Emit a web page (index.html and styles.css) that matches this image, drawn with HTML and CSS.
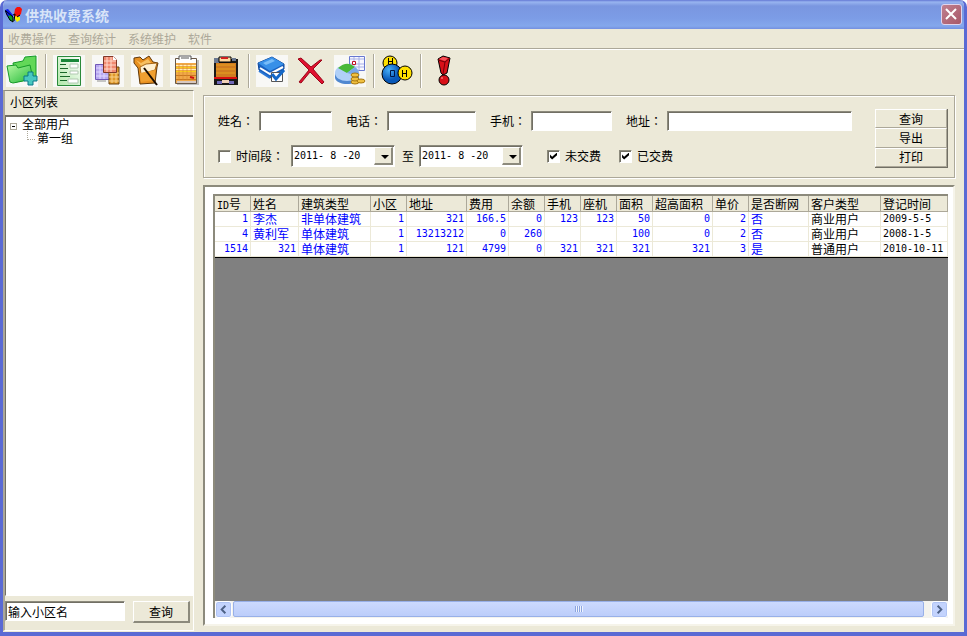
FILE: index.html
```html
<!DOCTYPE html>
<html lang="zh-CN">
<head>
<meta charset="utf-8">
<title>供热收费系统</title>
<link rel="stylesheet" href="styles.css">
</head>
<body>
<div class="window">
  <header class="titlebar">
    <svg class="logo" viewBox="0 0 17 16" aria-hidden="true">
      <path d="M0 3l3-1 5 6v5l-3-2-3-3z" fill="#0a18f0"/>
      <path d="M3 9l3-1 2 3v3H5z" fill="#0aa028"/>
      <path d="M9 8l1-6 2-2h3l2 2-1 5-4 4H9z" fill="#f81008"/>
      <path d="M10 9l5 1v3l-3 2-2-3z" fill="#f8f000"/>
      <path d="M0 3l2 5 3 5 3 2M1 4l7 6v5M9 14l1-7-2 1" fill="none" stroke="#000"/>
      <path d="M12 10l3-2" stroke="#000"/>
    </svg>
    <h1>供热收费系统</h1>
    <button class="close" aria-label="关闭"><svg viewBox="0 0 19 19"><path d="M4 4l10 10M14 4l-10 10" stroke="#fff" stroke-width="2"/></svg></button>
  </header>

  <nav class="menu">
    <a href="#">收费操作</a><a href="#">查询统计</a><a href="#">系统维护</a><a href="#">软件</a>
  </nav>

  <div class="toolbar">
    <button class="tool tile" aria-label="新建">
      <svg viewBox="0 0 32 32">
        <defs>
          <linearGradient id="green" x1="0" y1="0" x2="1" y2="1"><stop offset="0" stop-color="#b4f8a0"/><stop offset="1" stop-color="#20b838"/></linearGradient>
        </defs>
        <path d="M7 8l10-2 2-4 11-1v22l-20 4z" fill="#62d858" stroke="#169a28"/>
        <path d="M1 11l9-1 2 3 12-3 3 14-20 4-3-1z" fill="url(#green)" stroke="#169a28"/>
        <path d="M22 17h5v4h4v5h-4v4h-5v-4h-4v-5h4z" fill="#48c8c0" stroke="#087888"/>
      </svg>
    </button>
    <span class="sep"></span>
    <button class="tool tile" aria-label="列表">
      <svg viewBox="0 0 32 32">
        <defs><linearGradient id="sheet" x1="1" x2="0" y2="1"><stop offset="0" stop-color="#fff"/><stop offset="1" stop-color="#b0e8a8"/></linearGradient></defs>
        <path d="M4.500 1.500h23v29h-23z" fill="url(#sheet)" stroke="#2a8a3a"/>
        <path d="M8 4h18v3H8z" fill="#188838"/>
        <path d="M17 9h8v4h-8zM17 16h8v3h-8zM15 24h10v4H15z" fill="#fff" stroke="#b0c8b0"/>
        <path d="M7 9.500h6M7 13.500h8M7 17.500h7M7 21.500h10M7 25.500h7" stroke="#186828" stroke-width="1"/>
      </svg>
    </button>
    <button class="tool tile" aria-label="分组">
      <svg viewBox="0 0 32 32">
        <path d="M5 11h9v16H5z" fill="#777" opacity=".4"/>
        <path d="M3.500 9.500h14v15h-14z" fill="#b8a8f0" stroke="#7058b8"/>
        <path d="M4 13h13M4 17h13M4 21h13M8 10v14M12 10v14" stroke="#e0d8ff"/>
        <path d="M17 14l3-2h7v17H17z" fill="#e09828" stroke="#684010"/>
        <path d="M17 18h10M17 22h10M17 26h10M20 14v14M24 14v14" stroke="#f8d088"/>
        <path d="M11.500 1.500h10l3 3v13h-13z" fill="#f08870" stroke="#803828"/>
        <path d="M12 6h12M12 10h12M12 14h12M15 2v15M19 2v15" stroke="#ffd8c8"/>
        <path d="M21 1v4h4z" fill="#fff"/>
      </svg>
    </button>
    <button class="tool tile" aria-label="编辑">
      <svg viewBox="0 0 32 32">
        <path d="M3 3l6-1 3 3 6-4 4 6 5 1-1 4-2 16-15 1-2-16-4-5z" fill="#e89020" stroke="#603808"/>
        <path d="M5 5l5 3 7-4 3 4-9 4z" fill="#f8c060"/>
        <path d="M9 12l6-3 11-1-2 7-14 4z" fill="#fff0d0" stroke="#a86818"/>
        <path d="M9 18l15-3v10l-14 2z" fill="#f0a030"/>
        <path d="M13 13l13 17" stroke="#180c00" stroke-width="2"/>
      </svg>
    </button>
    <button class="tool tile" aria-label="账单">
      <svg viewBox="0 0 32 32">
        <path d="M7 5h22v25H7z" fill="#888" opacity=".5"/>
        <path d="M5.500 3.500h21v25h-21z" fill="#f0a848" stroke="#685848"/>
        <path d="M6 4h20v4H6z" fill="#fff"/>
        <path d="M9 5V1h12v4M11 3h8" fill="#fff" stroke="#555"/>
        <path d="M6 10.500h20M6 14.500h20" stroke="#fff0b8"/>
        <path d="M6 12.500h20M6 16.500h20" stroke="#f8d018"/>
        <path d="M6 20.500h20M6 24.500h20" stroke="#c87820"/>
        <path d="M9 9v16M13 9v16M17 9v16M21 9v16" stroke="#d88830" opacity=".6"/>
        <path d="M20 22l4 1" stroke="#d01010" stroke-width="2"/>
        <path d="M7 26h19v2H7z" fill="#d8c8c0"/>
      </svg>
    </button>
    <button class="tool" aria-label="报表">
      <svg viewBox="0 0 32 32">
        <path d="M5 4h24v26H5z" fill="#181818"/>
        <path d="M5 3h5v5H5zM23 3h4v3h-4z" fill="#6a7890"/>
        <path d="M10 2h12v5H10z" fill="#ffd8a0" stroke="#000"/>
        <path d="M12 3h7" stroke="#d02020" stroke-width="2"/>
        <path d="M7 8h20v15H7z" fill="#d07c20"/>
        <path d="M7 10h19M7 14h19M7 18h19" stroke="#e8a020"/>
        <path d="M5 22h23v2H5z" fill="#d81010"/>
        <path d="M8 26h5v3H8zM20 26h5v3h-5z" fill="#7068b8"/>
        <path d="M13 25h7v3h-7z" fill="#f0d0b8"/>
      </svg>
    </button>
    <span class="sep"></span>
    <button class="tool tile" aria-label="登记">
      <svg viewBox="0 0 32 32">
        <path d="M2 8l14-6 12 7v5l-14 9L3 15z" fill="#1860c0" stroke="#104898"/>
        <path d="M2 8l14-6 12 7-14 7z" fill="#3890e8"/>
        <path d="M7 8l9-4 3 2-9 4z" fill="#78bcf8"/>
        <path d="M4 13l10 6 13-7" fill="none" stroke="#fff" stroke-width="2"/>
        <path d="M3 16l11 7" stroke="#2878d8" stroke-width="2"/>
        <path d="M15.500 17.500h11v9h-11z" fill="#fff" stroke="#555"/>
        <path d="M16 19l4 5 8-9" fill="none" stroke="#1468c8" stroke-width="3"/>
      </svg>
    </button>
    <button class="tool" aria-label="删除">
      <svg viewBox="0 0 32 32">
        <path d="M3 4l3-1 10 9 9-7h2l-9 9 11 13-2 2-12-12L6 28l-2-1 10-12z" fill="#e01030" stroke="#980818"/>
      </svg>
    </button>
    <button class="tool tile" aria-label="统计">
      <svg viewBox="0 0 32 32">
        <path d="M15.500 1.500h15v14h-15z" fill="#f8f8ff" stroke="#6878d0"/>
        <path d="M16 4h14M16 9h14M16 12h14M20 2v13M25 2v13" stroke="#a8b0e8"/>
        <path d="M18.500 6.500h3v3h-3z" fill="#fff" stroke="#c01020"/>
        <path d="M1 19c2-7 22-8 24 0v4c-2 8-22 8-24 0z" fill="#5088d0"/>
        <ellipse cx="13" cy="18" rx="12" ry="8" fill="#b0d0f8"/>
        <path d="M13 18L4 13q9-8 17-1z" fill="#48b838"/>
        <path d="M13 18l8-6q5 4 4 9z" fill="#78a8e8"/>
        <g fill="#f0c040" stroke="#a87810"><ellipse cx="21" cy="27" rx="4" ry="2"/><ellipse cx="21" cy="24" rx="4" ry="2"/><ellipse cx="21" cy="20" rx="4" ry="2"/><ellipse cx="27" cy="26" rx="4" ry="2"/></g>
      </svg>
    </button>
    <span class="sep"></span>
    <button class="tool" aria-label="水">
      <svg viewBox="0 0 32 32">
        <defs><radialGradient id="ball" cx=".35" cy=".3"><stop offset="0" stop-color="#48b0f8"/><stop offset="1" stop-color="#0858b8"/></radialGradient></defs>
        <circle cx="9" cy="8" r="7" fill="#ffe000" stroke="#000"/>
        <path d="M7.500 3v6M11.500 3v6M8 6.500h4" stroke="#000"/>
        <circle cx="11" cy="19" r="10" fill="url(#ball)" stroke="#000"/>
        <path d="M9.500 15.500h4v6h-4z" fill="none" stroke="#001848"/>
        <circle cx="24" cy="18" r="7" fill="#ffe000" stroke="#000"/>
        <path d="M21.500 15v7M25.500 15v7M22 18.500h4" stroke="#000"/>
      </svg>
    </button>
    <span class="sep"></span>
    <button class="tool" aria-label="提醒">
      <svg viewBox="0 0 32 32">
        <path d="M10 4l5-3 7 2-3 15-4 2-2-2z" fill="#d81018" stroke="#000"/>
        <path d="M10 5l7 2 5-4M17 7l-2 12" fill="none" stroke="#700008"/>
        <path d="M11 4l4-2 5 1-3 3z" fill="#f85058"/>
        <circle cx="16" cy="25" r="5" fill="#d81018" stroke="#000"/>
        <circle cx="14" cy="23" r="1" fill="#f87070"/>
      </svg>
    </button>
  </div>

  <div class="body">
    <aside class="side">
      <h2>小区列表</h2>
      <ul class="tree">
        <li><button class="twist" aria-label="折叠"></button>全部用户
          <ul><li>第一组</li></ul>
        </li>
      </ul>
      <form class="side-search">
        <input class="box" type="text" value="输入小区名" aria-label="小区名">
        <button class="btn" type="button">查询</button>
      </form>
    </aside>

    <main class="main">
      <form class="filter">
        <div class="fields">
          <div class="row">
            <label for="name">姓名：</label><input class="box w-name" id="name" type="text">
            <label for="tel">电话：</label><input class="box w-tel" id="tel" type="text">
            <label for="cell">手机：</label><input class="box w-cell" id="cell" type="text">
            <label for="addr">地址：</label><input class="box w-addr" id="addr" type="text">
          </div>
          <div class="row dates">
            <input class="check" id="range" type="checkbox"><label class="range" for="range">时间段：</label>
            <span class="combo"><select id="from" aria-label="开始日期"><option>2011- 8 -20</option></select></span>
            <label class="to" for="until">至</label>
            <span class="combo"><select id="until"><option>2011- 8 -20</option></select></span>
            <input class="check first" id="unpaid" type="checkbox" checked><label class="state" for="unpaid">未交费</label>
            <input class="check" id="paid" type="checkbox" checked><label class="state" for="paid">已交费</label>
          </div>
        </div>
        <div class="stack">
          <button type="button">查询</button>
          <button type="button">导出</button>
          <button type="button">打印</button>
        </div>
      </form>

      <section class="panel">
        <div class="grid">
          <div class="gridview">
            <table>
              <colgroup><col class="c36"><col class="c48"><col class="c72"><col class="c36"><col class="c60"><col class="c42"><col class="c36"><col class="c36"><col class="c36"><col class="c36"><col class="c60"><col class="c36"><col class="c60"><col class="c72"><col></colgroup>
              <thead><tr><th><span class="n">ID</span>号</th><th>姓名</th><th>建筑类型</th><th>小区</th><th>地址</th><th>费用</th><th>余额</th><th>手机</th><th>座机</th><th>面积</th><th>超高面积</th><th>单价</th><th>是否断网</th><th>客户类型</th><th>登记时间</th></tr></thead>
              <tbody>
                <tr><td class="n">1</td><td>李杰</td><td>非单体建筑</td><td class="n">1</td><td class="n">321</td><td class="n">166.5</td><td class="n">0</td><td class="n">123</td><td class="n">123</td><td class="n">50</td><td class="n">0</td><td class="n">2</td><td>否</td><td class="k">商业用户</td><td class="d">2009-5-5</td></tr>
                <tr><td class="n">4</td><td>黄利军</td><td>单体建筑</td><td class="n">1</td><td class="n">13213212</td><td class="n">0</td><td class="n">260</td><td></td><td></td><td class="n">100</td><td class="n">0</td><td class="n">2</td><td>否</td><td class="k">商业用户</td><td class="d">2008-1-5</td></tr>
                <tr><td class="n">1514</td><td class="n">321</td><td>单体建筑</td><td class="n">1</td><td class="n">121</td><td class="n">4799</td><td class="n">0</td><td class="n">321</td><td class="n">321</td><td class="n">321</td><td class="n">321</td><td class="n">3</td><td>是</td><td class="k">普通用户</td><td class="d">2010-10-11</td></tr>
              </tbody>
            </table>
          </div>
          <div class="scroll">
            <button class="arrow" aria-label="向左"><svg viewBox="0 0 16 16"><path d="M10 4L6 8l4 4" fill="none" stroke="#4d6185" stroke-width="2"/></svg></button>
            <div class="track"><div class="thumb"></div></div>
            <button class="arrow" aria-label="向右"><svg viewBox="0 0 16 16"><path d="M6 4l4 4-4 4" fill="none" stroke="#4d6185" stroke-width="2"/></svg></button>
          </div>
        </div>
      </section>
    </main>
  </div>
</div>
</body>
</html>
```
FILE: styles.css
```css
* { box-sizing: border-box; }

body {
  margin: 0;
  background: #fff;
  color: #000;
  font: 12px/16px "Noto Sans CJK SC", sans-serif;
}

h1, h2, ul { margin: 0; padding: 0; list-style: none; font-size: 12px; font-weight: normal; }
button, input, select { font: inherit; color: inherit; margin: 0; padding: 0; border-radius: 0; }
svg { display: block; width: 100%; height: 100%; }

.window {
  display: flex;
  flex-direction: column;
  height: 100vh;
  overflow: hidden;
  border: solid #5a6ad4;
  border-width: 0 3px 4px;
  border-radius: 7px 7px 0 0;
  background: #ece9d8;
}

.titlebar {
  display: flex;
  align-items: center;
  flex: none;
  height: 29px;
  margin: 0 -3px;
  padding: 0 5px;
  background: linear-gradient(#6478d4 0, #98b4f0 2px, #7a96e0 6px, #7c9ce6 18px, #84a8ec 26px, #7490e0 29px);
}
.titlebar h1 { flex: 1; margin-left: 3px; font-size: 14px; font-weight: bold; color: #d8e4f8; }
.logo { width: 17px; height: 16px; }
.close {
  width: 21px;
  height: 21px;
  border: 1px solid #e0d4ec;
  border-radius: 3px;
  background: linear-gradient(135deg, #c08090, #a85868);
}

.menu {
  display: flex;
  gap: 12px;
  flex: none;
  height: 19px;
  padding: 2px 5px;
}
.menu a { color: #aca899; text-decoration: none; }

.toolbar {
  display: flex;
  align-items: center;
  gap: 7px;
  flex: none;
  height: 42px;
  padding: 2px 3px 0;
  border-top: 1px solid #aca899;
  box-shadow: inset 0 1px #fff;
}
.tool { width: 32px; height: 32px; border: 0; background: none; }
.tile { background: #f8f8f6; }
.sep { width: 2px; height: 34px; margin-right: -1px; border-left: 1px solid #aca899; border-right: 1px solid #fff; }

.body { display: flex; flex: 1; min-height: 0; gap: 9px; }

.side {
  display: flex;
  flex-direction: column;
  flex: none;
  width: 191px;
  margin-bottom: 1px;
  border: solid;
  border-width: 1px 1px 1px 2px;
  border-color: #8c8a7c #fff #fff #aca899;
}
.side h2 { padding: 3px 5px; height: 24px; }
.tree {
  flex: 1;
  padding: 0 1px;
  border: solid;
  border-width: 2px 0 1px 1px;
  border-color: #716f64 #fff #fff #716f64;
  background: #fff;
  line-height: 14px;
}
.twist {
  width: 7px;
  height: 7px;
  margin: 0 5px 1px 3px;
  border: 1px solid #aca899;
  background: linear-gradient(#000, #000) center / 3px 1px no-repeat;
}
.tree ul { margin-left: 20px; }
.tree ul li { display: flex; gap: 2px; }
.tree ul li::before {
  content: "";
  width: 7px;
  height: 8px;
  border: dotted #aca899;
  border-width: 0 0 1px 1px;
}

.box {
  min-width: 0;
  height: 20px;
  border: 1px solid;
  border-color: #8c8a7c #fff #fff #8c8a7c;
  background: #fff;
  box-shadow: inset 1px 1px #716f64;
  padding: 0 3px;
}
.side-search { display: flex; gap: 8px; padding: 5px 3px 7px 0; }
.side-search .box { flex: 1; padding: 0 2px; }
.btn {
  width: 57px;
  height: 22px;
  border: solid;
  border-width: 1px 2px 2px 1px;
  border-color: #fff #8c8a7c #8c8a7c #fff;
  background: #ece9d8;
  line-height: 14px;
}

.main { display: flex; flex-direction: column; flex: 1; min-width: 0; gap: 7px; padding: 5px 9px 6px 0; }

.filter {
  display: flex;
  gap: 23px;
  flex: none;
  height: 83px;
  padding: 13px 6px 9px 14px;
  border: 1px solid #aca899;
  box-shadow: inset 1px 1px #fff, 1px 1px #fff;
}
.fields { flex: 1; min-width: 0; padding-top: 2px; }
.row { display: flex; align-items: center; }
.row label { font-family: "Noto Sans CJK TC", sans-serif; font-feature-settings: "locl" 0; white-space: nowrap; }
.row .box { margin: 0 14px 0 5px; }
.w-name { width: 73px; }
.w-tel { width: 89px; }
.w-cell { width: 81px; }
.row .w-addr { flex: 1; margin-right: 0; }
.dates { margin-top: 14px; }
.range { margin: 0 7px 0 5px; }
.to { margin: 0 5px 0 7px; }
.state { margin: 0 18px 0 5px; }
.check {
  appearance: none;
  flex: none;
  width: 13px;
  height: 13px;
  border: 1px solid;
  border-color: #8c8a7c #fff #fff #8c8a7c;
  background: #fff;
  box-shadow: inset 1px 1px #716f64;
}
.first { margin-left: 24px; }
.check:checked::after {
  content: "";
  display: block;
  width: 7px;
  height: 7px;
  margin: 2px;
  background: #000;
  clip-path: polygon(0 30%, 30% 60%, 100% 0, 100% 40%, 30% 100%, 0 70%);
}
.combo { position: relative; flex: none; width: 104px; height: 22px; }
.combo select {
  appearance: none;
  width: 100%;
  height: 100%;
  padding: 0 20px 0 2px;
  border: 1px solid;
  border-color: #8c8a7c #fff #fff #8c8a7c;
  background: #fff;
  box-shadow: inset 1px 1px #716f64;
  font: 10px/16px "DejaVu Sans Mono", monospace;
}
.combo::before {
  content: "";
  position: absolute;
  inset: 2px 2px 2px auto;
  width: 16px;
  border: solid;
  border-width: 1px 2px 2px 1px;
  border-color: #fff #8c8a7c #8c8a7c #fff;
  background: #ece9d8;
  pointer-events: none;
}
.combo::after {
  content: "";
  position: absolute;
  right: 6px;
  top: 10px;
  border: solid transparent;
  border-width: 4px 4px 0;
  border-top-color: #000;
  pointer-events: none;
}
.stack {
  display: flex;
  flex-direction: column;
  width: 73px;
  height: 59px;
  border: solid #716f64;
  border-width: 0 1px 1px 0;
}
.stack button {
  flex: 1;
  border: 1px solid;
  border-color: #fff #aca899 #aca899 #fff;
  background: #ece9d8;
  line-height: 14px;
}

.panel {
  flex: 1;
  min-height: 0;
  padding: 7px 5px 6px 8px;
  border: 2px solid;
  border-color: #8c8a7c #f6f4ea #f6f4ea #8c8a7c;
  background: #fff;
}
.grid {
  display: flex;
  flex-direction: column;
  height: 100%;
  border: solid #8c8a7c;
  border-width: 2px 0 0 2px;
}
.gridview { flex: 1; overflow: hidden; background: #808080; }

table {
  width: 100%;
  table-layout: fixed;
  border-collapse: separate;
  border-spacing: 0;
  border-bottom: 1px solid #000;
  background: #fff;
  line-height: 14px;
}
.c36 { width: 36px; }
.c42 { width: 42px; }
.c48 { width: 48px; }
.c60 { width: 60px; }
.c72 { width: 72px; }
th, td {
  height: 15px;
  padding: 0 2px;
  border: solid #ece9d8;
  border-width: 0 1px 1px 0;
  text-align: left;
  white-space: nowrap;
}
th { height: 16px; font-weight: normal; background: #ece9d8; border-color: #aca899; }
td { color: #00f; }
td.k, td.d { color: #000; }
.n, td.d { font-family: "DejaVu Sans Mono", monospace; font-size: 10px; }
th .n { line-height: 10px; }
td.n { text-align: right; }

.scroll { display: flex; gap: 1px; flex: none; height: 17px; background: #f4f3ee; }
.arrow {
  width: 17px;
  height: 17px;
  border: 1px solid #fff;
  border-radius: 3px;
  background: #c3d3fd;
  box-shadow: inset 0 0 0 1px #b0c4f4;
}
.track { flex: 1; padding-right: 6px; }
.thumb {
  height: 16px;
  border: 1px solid #98b0e8;
  border-radius: 2px;
  background:
    repeating-linear-gradient(90deg, #8ca4e0 0 1px, #eef4fe 1px 2px) center / 8px 6px no-repeat,
    linear-gradient(#ccdafe, #bccdfa);
}
```
